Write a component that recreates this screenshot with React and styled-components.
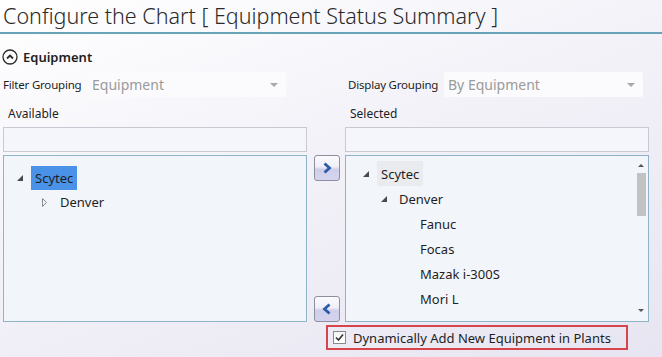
import styled, { createGlobalStyle } from "styled-components";

const Global = createGlobalStyle`
  html, body {
    margin: 0;
    padding: 0;
  }
  body {
    font-family: "Noto Sans", "Open Sans", sans-serif;
    color: #1e1e1e;
  }
`;

const Page = styled.div`
  width: 662px;
  height: 357px;
  overflow: hidden;
  background: linear-gradient(160deg, #ffffff 0%, #f4f3f9 40%, #e7e5f1 100%);
`;

const Title = styled.h1`
  margin: 0;
  height: 32px;
  padding-left: 3px;
  font-size: 21.5px;
  font-weight: 300;
  line-height: 31px;
  color: #2a2a2a;
  border-bottom: 2px solid #6aa3b8;
  white-space: nowrap;
`;

const Section = styled.div`
  display: flex;
  align-items: center;
  gap: 5px;
  height: 22px;
  margin-top: 12px;
  padding-left: 2px;
  font-size: 13px;
  font-weight: 600;
`;

const Grid = styled.div`
  display: grid;
  grid-template-columns: 304px 38px 304px;
  grid-template-rows: 25px 24px 25px 167px 25px;
  row-gap: 3px;
  padding-left: 3px;
  margin-top: 4px;
`;

const GroupRow = styled.div`
  display: flex;
  align-items: center;
  grid-column: ${(p) => p.$col};
  padding-left: ${(p) => p.$pad || 0}px;
`;

const Label = styled.span`
  font-size: 11.5px;
  letter-spacing: -0.2px;
  white-space: nowrap;
  width: ${(p) => p.$w}px;
`;

const Combo = styled.div`
  display: flex;
  align-items: center;
  justify-content: space-between;
  width: ${(p) => p.$w}px;
  height: 25px;
  box-sizing: border-box;
  padding: 0 8px 0 4px;
  background: #fbfbfd;
  border-radius: 2px;
  font-size: 14px;
  color: #9a9a9a;
`;

const Caret = styled.span`
  width: 0;
  height: 0;
  border-left: 4px solid transparent;
  border-right: 4px solid transparent;
  border-top: 4px solid #a8a8a8;
`;

const ColLabel = styled.div`
  grid-column: ${(p) => p.$col};
  padding-left: 5px;
  font-size: 12px;
  display: flex;
  align-items: flex-end;
  padding-bottom: 2px;
`;

const Search = styled.div`
  grid-column: ${(p) => p.$col};
  border: 1px solid #c7c9d3;
  background: #f4f6fb;
`;

const TreeBox = styled.div`
  grid-column: ${(p) => p.$col};
  position: relative;
  border: 1px solid #8fb4c9;
  background: #f2f6fb;
  padding-top: ${(p) => p.$top}px;
  box-sizing: border-box;
  overflow: hidden;
`;

const Row = styled.div`
  display: flex;
  align-items: center;
  height: ${(p) => p.$h}px;
  padding-left: ${(p) => p.$indent}px;
  font-size: 13px;
`;

const Expander = styled.span`
  display: inline-flex;
  width: 14px;
  justify-content: flex-start;
`;

const Node = styled.span`
  display: inline-flex;
  align-items: center;
  height: 100%;
  padding: 0 4px;
  background: ${(p) => (p.$sel === "blue" ? "#4a92e8" : p.$sel === "gray" ? "#e9ebef" : "transparent")};
`;

const Scroll = styled.div`
  position: absolute;
  right: 2px;
  top: 4px;
  bottom: 4px;
  width: 10px;
  display: flex;
  flex-direction: column;
  align-items: center;
`;

const Thumb = styled.div`
  width: 9px;
  height: 43px;
  margin-top: 6px;
  background: #c2c2c4;
`;

const Arrow = styled.span`
  width: 0;
  height: 0;
  border-left: 3px solid transparent;
  border-right: 3px solid transparent;
  ${(p) => (p.$up ? "border-bottom: 3px solid #555;" : "border-top: 3px solid #555;")}
  margin-top: ${(p) => (p.$up ? "4px" : "auto")};
  margin-bottom: ${(p) => (p.$up ? 0 : 5)}px;
`;

const Mid = styled.div`
  display: flex;
  flex-direction: column;
  justify-content: space-between;
  align-items: center;
  padding-left: 1px;
`;

const MoveButton = styled.button`
  width: 26px;
  height: 26px;
  padding: 0;
  display: flex;
  align-items: center;
  justify-content: center;
  border: 1px solid #8d8f9e;
  border-radius: 3px;
  background: linear-gradient(#fbfbfe 0%, #eeeef8 45%, #cfcfea 55%, #d4d4ee 100%);
`;

const CheckRow = styled.div`
  grid-column: 2 / 4;
  margin-left: 19px;
  width: 302px;
  box-sizing: border-box;
  border: 2px solid #d6454b;
  display: flex;
  align-items: center;
  gap: 7px;
  padding-left: 5px;
  font-size: 13px;
`;

const Box = styled.span`
  width: 11px;
  height: 11px;
  border: 1px solid #8a8a8a;
  background: linear-gradient(#f4f4f4, #ffffff);
  display: flex;
  align-items: center;
  justify-content: center;
`;

const Filled = () => (
  <svg width="6" height="6" viewBox="0 0 6 6">
    <polygon points="6,0 6,6 0,6" fill="#4a4a4a" />
  </svg>
);

const Hollow = () => (
  <svg width="5" height="9" viewBox="0 0 5 9">
    <polygon points="0.5,0.5 4.5,4.5 0.5,8.5" fill="none" stroke="#8a8a8a" />
  </svg>
);

const Chevron = ({ left }) => (
  <svg width="10" height="12" viewBox="0 0 10 12">
    <path
      d={left ? "M7.5 1.5 L2.5 6 L7.5 10.5" : "M2.5 1.5 L7.5 6 L2.5 10.5"}
      fill="none"
      stroke="#2a5ba8"
      strokeWidth="2.8"
    />
  </svg>
);

const selected = ["Fanuc", "Focas", "Mazak i-300S", "Mori L"];

export default function App() {
  return (
    <Page>
      <Global />
      <Title>Configure the Chart [ Equipment Status Summary ]</Title>
      <Section>
        <svg width="16" height="16" viewBox="0 0 16 16">
          <circle cx="8" cy="8" r="7" fill="none" stroke="#2b2b2b" strokeWidth="1.3" />
          <path d="M5 9.5 L8 6.5 L11 9.5" fill="none" stroke="#2b2b2b" strokeWidth="1.8" />
        </svg>
        Equipment
      </Section>
      <Grid>
        <GroupRow $col="1">
          <Label $w={85}>Filter Grouping</Label>
          <Combo $w={198}>
            Equipment
            <Caret />
          </Combo>
        </GroupRow>
        <GroupRow $col="3" $pad={3}>
          <Label $w={96}>Display Grouping</Label>
          <Combo $w={199}>
            By Equipment
            <Caret />
          </Combo>
        </GroupRow>
        <ColLabel $col="1">Available</ColLabel>
        <ColLabel $col="3">Selected</ColLabel>
        <Search $col="1" />
        <Search $col="3" />
        <TreeBox $col="1" $top={10}>
          <Row $h={24} $indent={13}>
            <Expander>
              <Filled />
            </Expander>
            <Node $sel="blue">Scytec</Node>
          </Row>
          <Row $h={24} $indent={38}>
            <Expander>
              <Hollow />
            </Expander>
            <Node>Denver</Node>
          </Row>
        </TreeBox>
        <Mid>
          <MoveButton>
            <Chevron />
          </MoveButton>
          <MoveButton>
            <Chevron left />
          </MoveButton>
        </Mid>
        <TreeBox $col="3" $top={5}>
          <Row $h={25} $indent={17}>
            <Expander>
              <Filled />
            </Expander>
            <Node $sel="gray">Scytec</Node>
          </Row>
          <Row $h={25} $indent={35}>
            <Expander>
              <Filled />
            </Expander>
            <Node>Denver</Node>
          </Row>
          {selected.map((name) => (
            <Row key={name} $h={25} $indent={70}>
              <Node>{name}</Node>
            </Row>
          ))}
          <Scroll>
            <Arrow $up />
            <Thumb />
            <Arrow />
          </Scroll>
        </TreeBox>
        <CheckRow>
          <Box>
            <svg width="9" height="9" viewBox="0 0 9 9">
              <path d="M1 4.5 L3.5 7 L8 1.5" fill="none" stroke="#333" strokeWidth="1.6" />
            </svg>
          </Box>
          Dynamically Add New Equipment in Plants
        </CheckRow>
      </Grid>
    </Page>
  );
}
